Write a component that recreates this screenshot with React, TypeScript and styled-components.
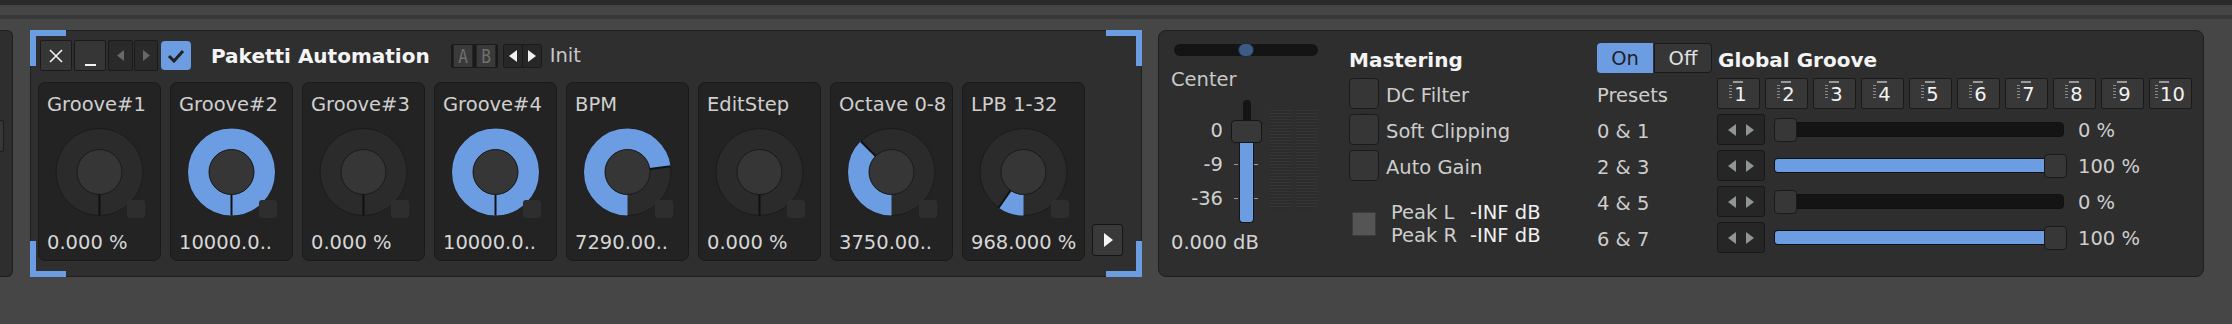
import React from "react";
import styled, { createGlobalStyle } from "styled-components";

const BLUE = "#6c9de3";

const GlobalStyle = createGlobalStyle`
  html, body {
    margin: 0;
    padding: 0;
    background: #464646;
  }
  body {
    font-family: "DejaVu Sans", "Liberation Sans", sans-serif;
    font-size: 19.5px;
    color: #cdcdcd;
  }
  * {
    box-sizing: border-box;
  }
`;

interface IKnob {
  name: string;
  value: number;
  text: string;
}

const knobs: IKnob[] = [
  { name: "Groove#1", value: 0, text: "0.000 %" },
  { name: "Groove#2", value: 1, text: "10000.0.." },
  { name: "Groove#3", value: 0, text: "0.000 %" },
  { name: "Groove#4", value: 1, text: "10000.0.." },
  { name: "BPM", value: 0.729, text: "7290.00.." },
  { name: "EditStep", value: 0, text: "0.000 %" },
  { name: "Octave 0-8", value: 0.375, text: "3750.00.." },
  { name: "LPB 1-32", value: 0.0968, text: "968.000 %" },
];

const grooveRows = [
  { label: "0 & 1", value: 0 },
  { label: "2 & 3", value: 1 },
  { label: "4 & 5", value: 0 },
  { label: "6 & 7", value: 1 },
];

function Tri({ dir, color, w = 8, h = 12 }: { dir: "left" | "right"; color: string; w?: number; h?: number }) {
  const pts = dir === "left" ? `${w},0 0,${h / 2} ${w},${h}` : `0,0 ${w},${h / 2} 0,${h}`;
  return (
    <svg width={w} height={h} viewBox={`0 0 ${w} ${h}`}>
      <polygon points={pts} fill={color} />
    </svg>
  );
}

// value ring starts at 6 o'clock and runs clockwise
function Knob({ value }: { value: number }) {
  const cx = 61.5;
  const cy = 49;
  const r1 = 22.5;
  const r2 = 43.5;
  const rm = (r1 + r2) / 2;
  const circ = 2 * Math.PI * rm;
  const a = 2 * Math.PI * value;
  const x1 = cx - r1 * Math.sin(a);
  const y1 = cy + r1 * Math.cos(a);
  const x2 = cx - r2 * Math.sin(a);
  const y2 = cy + r2 * Math.cos(a);
  return (
    <svg width="123" height="100" viewBox="0 0 123 100">
      <circle cx={cx} cy={cy} r={r2} fill="#2b2b2b" stroke="#1b1b1b" strokeWidth="1" />
      {value > 0 && (
        <circle
          cx={cx}
          cy={cy}
          r={rm}
          fill="none"
          stroke={BLUE}
          strokeWidth={r2 - r1}
          strokeDasharray={`${circ * value} ${circ}`}
          transform={`rotate(90 ${cx} ${cy})`}
        />
      )}
      <circle cx={cx} cy={cy} r={r1} fill="#363636" stroke="#1a1a1a" strokeWidth="1" />
      <line x1={x1} y1={y1} x2={x2} y2={y2} stroke="#111" strokeWidth="2" />
      <rect x="89" y="77" width="18" height="18" rx="3" fill="#2e2e2e" />
    </svg>
  );
}

function GrooveSlider({ value }: { value: number }) {
  const left = value * 270;
  return (
    <SliderBox>
      <TrackBar>
        <TrackFill style={{ width: left + 10 }} />
      </TrackBar>
      <SliderThumb style={{ left }} />
    </SliderBox>
  );
}

export default function App() {
  return (
    <Page>
      <GlobalStyle />
      <TopStrip />
      <Main>
        <LeftStub>
          <StubTab />
        </LeftStub>

        <Device>
          <Corner $v="top" $h="left" />
          <Corner $v="top" $h="right" />
          <Corner $v="bottom" $h="left" />
          <Corner $v="bottom" $h="right" />

          <Toolbar>
            <ToolButton $w={32} $mr={2}>
              <svg width="14" height="14" viewBox="0 0 14 14">
                <path d="M1 1 L13 13 M13 1 L1 13" stroke="#f2f2f2" strokeWidth="1.6" />
              </svg>
            </ToolButton>
            <ToolButton $w={32} $mr={2}>
              <Underscore />
            </ToolButton>
            <ToolButton $w={25} $mr={1} $dark>
              <Tri dir="left" color="#686868" w={7} h={11} />
            </ToolButton>
            <ToolButton $w={24} $mr={3} $dark>
              <Tri dir="right" color="#686868" w={7} h={11} />
            </ToolButton>
            <CheckButton>
              <svg width="18" height="14" viewBox="0 0 18 14">
                <polyline points="2,7 7,12 16,2" fill="none" stroke="#222" strokeWidth="3" />
              </svg>
            </CheckButton>
            <DeviceTitle>Paketti Automation</DeviceTitle>
            <SegGroup $ml={21}>
              <AbCell>A</AbCell>
              <AbCell>B</AbCell>
            </SegGroup>
            <SegGroup $ml={5}>
              <ArrowCell>
                <Tri dir="left" color="#f0f0f0" />
              </ArrowCell>
              <ArrowCell>
                <Tri dir="right" color="#f0f0f0" />
              </ArrowCell>
            </SegGroup>
            <PresetName>Init</PresetName>
          </Toolbar>

          <CardsLine>
            <Cards>
              {knobs.map((k) => (
                <Card key={k.name}>
                  <CardTitle>{k.name}</CardTitle>
                  <KnobWrap>
                    <Knob value={k.value} />
                  </KnobWrap>
                  <CardValue>{k.text}</CardValue>
                </Card>
              ))}
            </Cards>
            <PlayButton>
              <Tri dir="right" color="#f4f4f4" w={9} h={14} />
            </PlayButton>
          </CardsLine>
        </Device>

        <Master>
          <PanColumn>
            <PanTrack>
              <PanThumb />
            </PanTrack>
            <CenterLabel>Center</CenterLabel>
            <FaderBlock>
              <ScaleLabels>
                <div>0</div>
                <div>-9</div>
                <div>-36</div>
              </ScaleLabels>
              <Fader>
                <FaderTop />
                <FaderThumb />
                <FaderFill />
                <Tick $top={64} $left={3} />
                <Tick $top={64} $left={23} />
                <Tick $top={98} $left={3} />
                <Tick $top={98} $left={23} />
              </Fader>
              <Meters>
                <Meter />
                <Meter />
              </Meters>
            </FaderBlock>
            <DbValue>0.000 dB</DbValue>
          </PanColumn>

          <MasteringColumn>
            <SectionTitle>Mastering</SectionTitle>
            {["DC Filter", "Soft Clipping", "Auto Gain"].map((t) => (
              <CheckRow key={t}>
                <CheckBox />
                <CheckLabel>{t}</CheckLabel>
              </CheckRow>
            ))}
            <PeakRow>
              <PeakLed />
              <PeakGrid>
                <span>Peak L</span>
                <PeakValue>-INF dB</PeakValue>
                <span>Peak R</span>
                <PeakValue>-INF dB</PeakValue>
              </PeakGrid>
            </PeakRow>
          </MasteringColumn>

          <GrooveGrid>
            <Toggle>
              <ToggleOn>On</ToggleOn>
              <ToggleOff>Off</ToggleOff>
            </Toggle>
            <SectionTitle $ml={1}>Global Groove</SectionTitle>

            <RowLabel>Presets</RowLabel>
            <PresetButtons>
              {Array.from({ length: 10 }, (_, i) => (
                <PresetButton key={i}>
                  <PresetDigit>{i + 1}</PresetDigit>
                </PresetButton>
              ))}
            </PresetButtons>

            {grooveRows.map((r) => (
              <React.Fragment key={r.label}>
                <RowLabel>{r.label}</RowLabel>
                <SliderRow>
                  <NudgeBox>
                    <Tri dir="left" color="#8d9595" />
                    <Tri dir="right" color="#8d9595" />
                  </NudgeBox>
                  <GrooveSlider value={r.value} />
                  <Percent>{r.value * 100} %</Percent>
                </SliderRow>
              </React.Fragment>
            ))}
          </GrooveGrid>
        </Master>
      </Main>
    </Page>
  );
}

const Page = styled.div`
  width: 2232px;
  height: 324px;
  overflow: hidden;
  background: #464646;
`;

const TopStrip = styled.div`
  height: 30px;
  background: linear-gradient(
    to bottom,
    #2a2a2a 0 5px,
    #454545 5px 15px,
    #383838 15px 19px,
    #464646 19px 30px
  );
`;

const Main = styled.div`
  display: flex;
  height: 247px;
`;

const LeftStub = styled.div`
  position: relative;
  width: 13px;
  margin-right: 17px;
  background: #2e2e2e;
  border: 1px solid #1e1e1e;
  border-left: none;
  border-radius: 0 6px 6px 0;
`;

const StubTab = styled.div`
  position: absolute;
  left: 0;
  top: 89px;
  width: 4px;
  height: 32px;
  background: #373737;
  border: 1px solid #1c1c1c;
  border-left: none;
  border-radius: 0 3px 3px 0;
`;

const Device = styled.section`
  position: relative;
  width: 1112px;
  background: #2f2f2f;
  border: 1px solid #1f1f1f;
  padding: 9px 0 0 7px;
`;

const Corner = styled.div<{ $v: "top" | "bottom"; $h: "left" | "right" }>`
  position: absolute;
  width: 36px;
  height: 36px;
  ${(p) => p.$v}: -1px;
  ${(p) => p.$h}: -1px;
  border-${(p) => p.$v}: 6px solid ${BLUE};
  border-${(p) => p.$h}: 6px solid ${BLUE};
`;

const Toolbar = styled.div`
  display: flex;
  align-items: center;
  height: 31px;
  margin-left: 2px;
`;

const ToolButton = styled.div<{ $w: number; $mr: number; $dark?: boolean }>`
  width: ${(p) => p.$w}px;
  height: 31px;
  margin-right: ${(p) => p.$mr}px;
  display: flex;
  align-items: center;
  justify-content: center;
  background: ${(p) => (p.$dark ? "#2a2a2a" : "#363636")};
  border: 1px solid #1a1a1a;
  border-radius: 2px;
`;

const Underscore = styled.div`
  width: 11px;
  height: 2px;
  margin-top: 18px;
  background: #f2f2f2;
`;

const CheckButton = styled.div`
  width: 30px;
  height: 29px;
  display: flex;
  align-items: center;
  justify-content: center;
  background: ${BLUE};
  border-radius: 4px;
`;

const DeviceTitle = styled.div`
  margin-left: 20px;
  font-weight: bold;
  font-size: 20px;
  color: #f4f4f4;
  white-space: nowrap;
`;

const SegGroup = styled.div<{ $ml: number }>`
  display: flex;
  gap: 1px;
  height: 24px;
  margin-left: ${(p) => p.$ml}px;
  background: #1a1a1a;
  border: 1px solid #1a1a1a;
  border-radius: 2px;
`;

const AbCell = styled.div`
  width: 22px;
  display: flex;
  align-items: center;
  justify-content: center;
  background: #3a3a3a;
  color: #6f6f6f;
  font-family: "DejaVu Sans Mono", monospace;
  font-size: 19px;
  transform: scaleX(0.85);
`;

const ArrowCell = styled.div`
  width: 18px;
  display: flex;
  align-items: center;
  justify-content: center;
  background: #272727;
`;

const PresetName = styled.div`
  margin-left: 8px;
  color: #c8c8c8;
`;

const CardsLine = styled.div`
  display: flex;
  align-items: flex-end;
  gap: 7px;
  margin-top: 11px;
`;

const Cards = styled.div`
  display: flex;
  gap: 9px;
`;

const Card = styled.div`
  width: 123px;
  height: 179px;
  padding-top: 11px;
  background: #232323;
  border: 1px solid #1a1a1a;
  border-radius: 7px;
  display: flex;
  flex-direction: column;
`;

const CardTitle = styled.div`
  padding-left: 8px;
  line-height: 22px;
  color: #cfcfcf;
  white-space: nowrap;
`;

const KnobWrap = styled.div`
  margin: 7px 0 0 -1px;
  height: 100px;
`;

const CardValue = styled.div`
  margin-top: 9px;
  padding-left: 8px;
  line-height: 22px;
  color: #d6d6d6;
  white-space: nowrap;
`;

const PlayButton = styled.div`
  width: 31px;
  height: 32px;
  margin-bottom: 5px;
  display: flex;
  align-items: center;
  justify-content: center;
  padding-left: 2px;
  background: #393939;
  border: 1px solid #161616;
  border-radius: 3px;
`;

const Master = styled.section`
  margin-left: 16px;
  width: 1046px;
  display: flex;
  padding: 12px 0 0 12px;
  background: #2e2e2e;
  border: 1px solid #1e1e1e;
  border-radius: 8px;
`;

const PanColumn = styled.div`
  width: 147px;
  margin-right: 31px;
  display: flex;
  flex-direction: column;
`;

const PanTrack = styled.div`
  position: relative;
  width: 144px;
  height: 12px;
  margin: 1px 0 0 3px;
  background: #141414;
  border-radius: 6px;
`;

const PanThumb = styled.div`
  position: absolute;
  left: 64px;
  top: -1px;
  width: 16px;
  height: 14px;
  background: #3d5b84;
  border: 1px solid #1d2b3e;
  border-radius: 7px;
`;

const CenterLabel = styled.div`
  margin-top: 12.5px;
  line-height: 22px;
  color: #c8c8c8;
`;

const FaderBlock = styled.div`
  display: flex;
  height: 123px;
  margin-top: 9.5px;
`;

const ScaleLabels = styled.div`
  width: 52px;
  padding-top: 14px;
  line-height: 34px;
  text-align: right;
  color: #d0d0d0;
`;

const Fader = styled.div`
  position: relative;
  width: 31px;
  margin-left: 8px;
  display: flex;
  flex-direction: column;
  align-items: center;
`;

const FaderTop = styled.div`
  width: 8px;
  height: 22px;
  margin-bottom: -2px;
  background: #141414;
  border-radius: 4px 4px 0 0;
`;

const FaderThumb = styled.div`
  width: 31px;
  height: 23px;
  background: #383838;
  border: 1px solid #161616;
  border-radius: 4px;
`;

const FaderFill = styled.div`
  width: 15px;
  height: 80px;
  background: ${BLUE};
  border: 1px solid #161616;
  border-top: none;
  border-radius: 0 0 4px 4px;
`;

const Tick = styled.div<{ $top: number; $left: number }>`
  position: absolute;
  top: ${(p) => p.$top}px;
  left: ${(p) => p.$left}px;
  width: 4px;
  height: 1px;
  background: #9a9a9a;
`;

const Meters = styled.div`
  display: flex;
  gap: 4px;
  height: 99px;
  margin: 10px 0 0 8px;
`;

const Meter = styled.div`
  width: 22px;
  background: repeating-linear-gradient(to bottom, #363636 0 1px, #2c2c2c 1px 3px);
`;

const DbValue = styled.div`
  margin-top: 9px;
  line-height: 22px;
  color: #d4d4d4;
`;

const MasteringColumn = styled.div`
  width: 248px;
  display: flex;
  flex-direction: column;
`;

const SectionTitle = styled.div<{ $ml?: number }>`
  height: 30px;
  padding-top: 2px;
  margin-left: ${(p) => p.$ml ?? 0}px;
  line-height: 30px;
  font-weight: bold;
  font-size: 20px;
  color: #f4f4f4;
  white-space: nowrap;
`;

const CheckRow = styled.div`
  display: flex;
  align-items: center;
  height: 31px;
  margin-top: 5px;
`;

const CheckBox = styled.div`
  width: 30px;
  height: 31px;
  background: #363636;
  border: 1px solid #1a1a1a;
  border-radius: 4px;
`;

const CheckLabel = styled.div`
  margin-left: 7px;
  padding-top: 3px;
  color: #cdcdcd;
`;

const PeakRow = styled.div`
  display: flex;
  align-items: center;
  margin-top: 20px;
`;

const PeakLed = styled.div`
  width: 24px;
  height: 24px;
  margin-left: 3px;
  background: #555555;
  border: 1px solid #3c3c3c;
`;

const PeakGrid = styled.div`
  display: grid;
  grid-template-columns: 79px auto;
  margin-left: 15px;
  line-height: 23px;
  color: #cdcdcd;
`;

const PeakValue = styled.span`
  color: #f0f0f0;
`;

const GrooveGrid = styled.div`
  display: grid;
  grid-template-columns: 120px 475px;
  grid-template-rows: 30px repeat(5, 31px);
  row-gap: 5px;
`;

const Toggle = styled.div`
  display: flex;
  gap: 1px;
  height: 30px;
`;

const ToggleOn = styled.div`
  width: 56px;
  display: flex;
  align-items: center;
  justify-content: center;
  background: ${BLUE};
  color: #1f2126;
  border-radius: 4px 0 0 4px;
`;

const ToggleOff = styled.div`
  width: 58px;
  display: flex;
  align-items: center;
  justify-content: center;
  background: #363636;
  color: #e2e2e2;
  border: 1px solid #1a1a1a;
  border-radius: 0 4px 4px 0;
`;

const RowLabel = styled.div`
  padding-top: 2px;
  line-height: 31px;
  color: #cdcdcd;
  white-space: nowrap;
`;

const PresetButtons = styled.div`
  display: flex;
  gap: 5px;
`;

const PresetButton = styled.div`
  width: 43px;
  height: 31px;
  display: flex;
  align-items: center;
  justify-content: center;
  padding: 3px 0 0 4px;
  background: #383838;
  border: 1px solid #1a1a1a;
  border-radius: 2px;
`;

const PresetDigit = styled.span`
  position: relative;
  color: #f2f2f2;
  line-height: 20px;

  &::before {
    content: "";
    position: absolute;
    left: -1px;
    top: -4px;
    width: 10px;
    height: 2px;
    background: #9a9a9a;
  }

  &::after {
    content: "";
    position: absolute;
    left: -5px;
    top: 0;
    width: 3px;
    height: 15px;
    background: repeating-linear-gradient(to bottom, #8a8a8a 0 1px, transparent 1px 3px);
  }
`;

const SliderRow = styled.div`
  display: flex;
  align-items: center;
`;

const NudgeBox = styled.div`
  width: 48px;
  height: 31px;
  display: flex;
  align-items: center;
  justify-content: center;
  gap: 10px;
  background: #262626;
  border: 1px solid #171717;
  border-radius: 3px;
`;

const SliderBox = styled.div`
  position: relative;
  width: 293px;
  height: 24px;
  margin-left: 9px;
`;

const TrackBar = styled.div`
  position: absolute;
  left: 0;
  right: 3px;
  top: 4px;
  height: 15px;
  background: #141414;
  border: 1px solid #111111;
  border-radius: 4px;
  overflow: hidden;
`;

const TrackFill = styled.div`
  height: 100%;
  background: ${BLUE};
`;

const SliderThumb = styled.div`
  position: absolute;
  top: 0;
  width: 23px;
  height: 24px;
  background: #373737;
  border: 1px solid #1a1a1a;
  border-radius: 4px;
`;

const Percent = styled.div`
  margin-left: 11px;
  padding-top: 2px;
  line-height: 31px;
  color: #cdcdcd;
`;
